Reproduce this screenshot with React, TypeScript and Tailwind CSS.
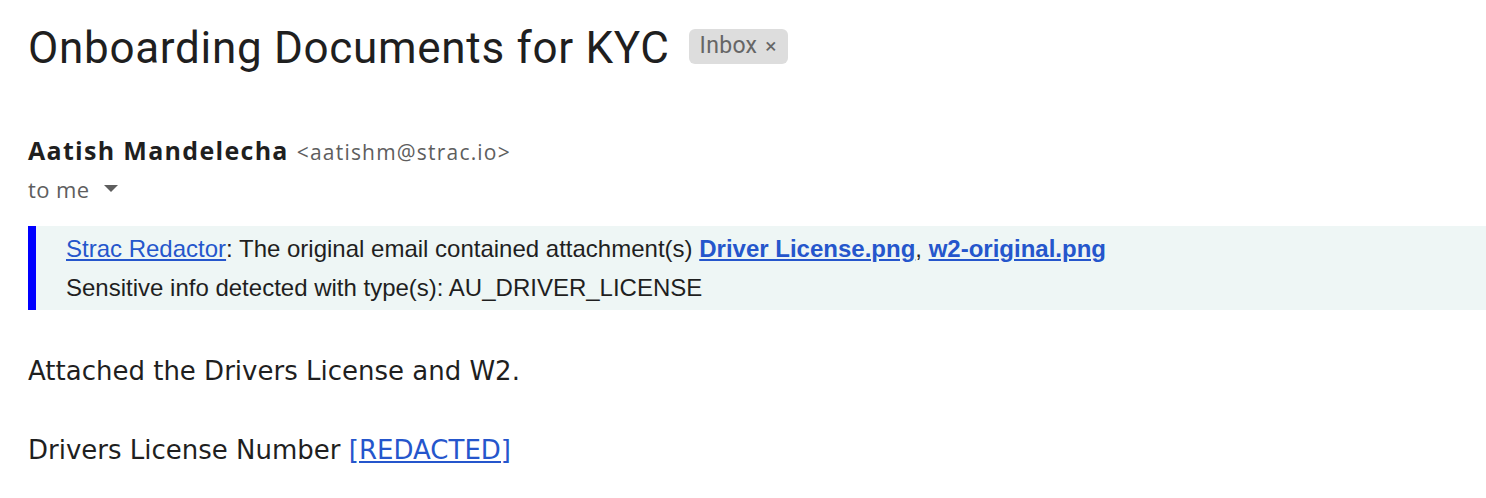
import React from 'react';

const App = () => {
  return (
    <div className="min-h-screen w-[1486px] bg-white pl-[28px] text-[#1f1f1f]">
      <div className="flex items-center pt-[20px] h-[76px]">
        <h1 className="font-['Roboto',sans-serif] text-[44px] leading-[52px] font-normal tracking-[0.7px]">
          Onboarding Documents for KYC
        </h1>
        <span className="ml-[19px] -mt-[3px] flex items-center h-[35px] px-[11px] rounded-[6px] bg-[#dddddd] text-[#666666] font-['Roboto',sans-serif] text-[23px] tracking-[0.3px]">
          Inbox
          <span className="ml-[8px] text-[21px]">×</span>
        </span>
      </div>

      <div className="mt-[56px] font-['Open_Sans',sans-serif]">
        <div className="flex items-baseline h-[32px]">
          <span className="text-[25px] font-bold tracking-[1.3px] text-[#1f1f1f]">Aatish Mandelecha</span>
          <span className="ml-[8px] text-[21px] tracking-[1.2px] text-[#5e5e5e]">&lt;aatishm@strac.io&gt;</span>
        </div>
        <div className="flex items-center mt-[5px] h-[40px] text-[22px] tracking-[0.4px] text-[#5e5e5e]">
          <span>to me</span>
          <svg className="ml-[13px]" width="16" height="8" viewBox="0 0 16 8">
            <path d="M1 0 L15 0 L8 7 Z" fill="#5e5e5e" />
          </svg>
        </div>
      </div>

      <div className="mt-[17px] h-[84px] border-l-[8px] border-[#0000ff] bg-[#eef6f5] pl-[30px] pt-[3px] font-['Liberation_Sans',Arial,sans-serif] text-[24px] text-[#1f1f1f]">
        <div className="h-[40px] flex items-center">
          <span>
            <a href="#" className="text-[#2556cc] underline">Strac Redactor</a>: The original email contained attachment(s){' '}
            <a href="#" className="text-[#2556cc] underline font-bold">Driver License.png</a>,{' '}
            <a href="#" className="text-[#2556cc] underline font-bold">w2-original.png</a>
          </span>
        </div>
        <div className="h-[38px] flex items-center">Sensitive info detected with type(s): AU_DRIVER_LICENSE</div>
      </div>

      <div className="mt-[41px] font-['DejaVu_Sans',Verdana,sans-serif] text-[26px] leading-[40px] text-[#1f1f1f]">
        <div>Attached the Drivers License and W2.</div>
        <div className="h-[39px]"></div>
        <div>
          Drivers License Number{' '}
          <a href="#" className="text-[#2556cc] underline">[REDACTED]</a>
        </div>
      </div>
    </div>
  );
};

export default App;
